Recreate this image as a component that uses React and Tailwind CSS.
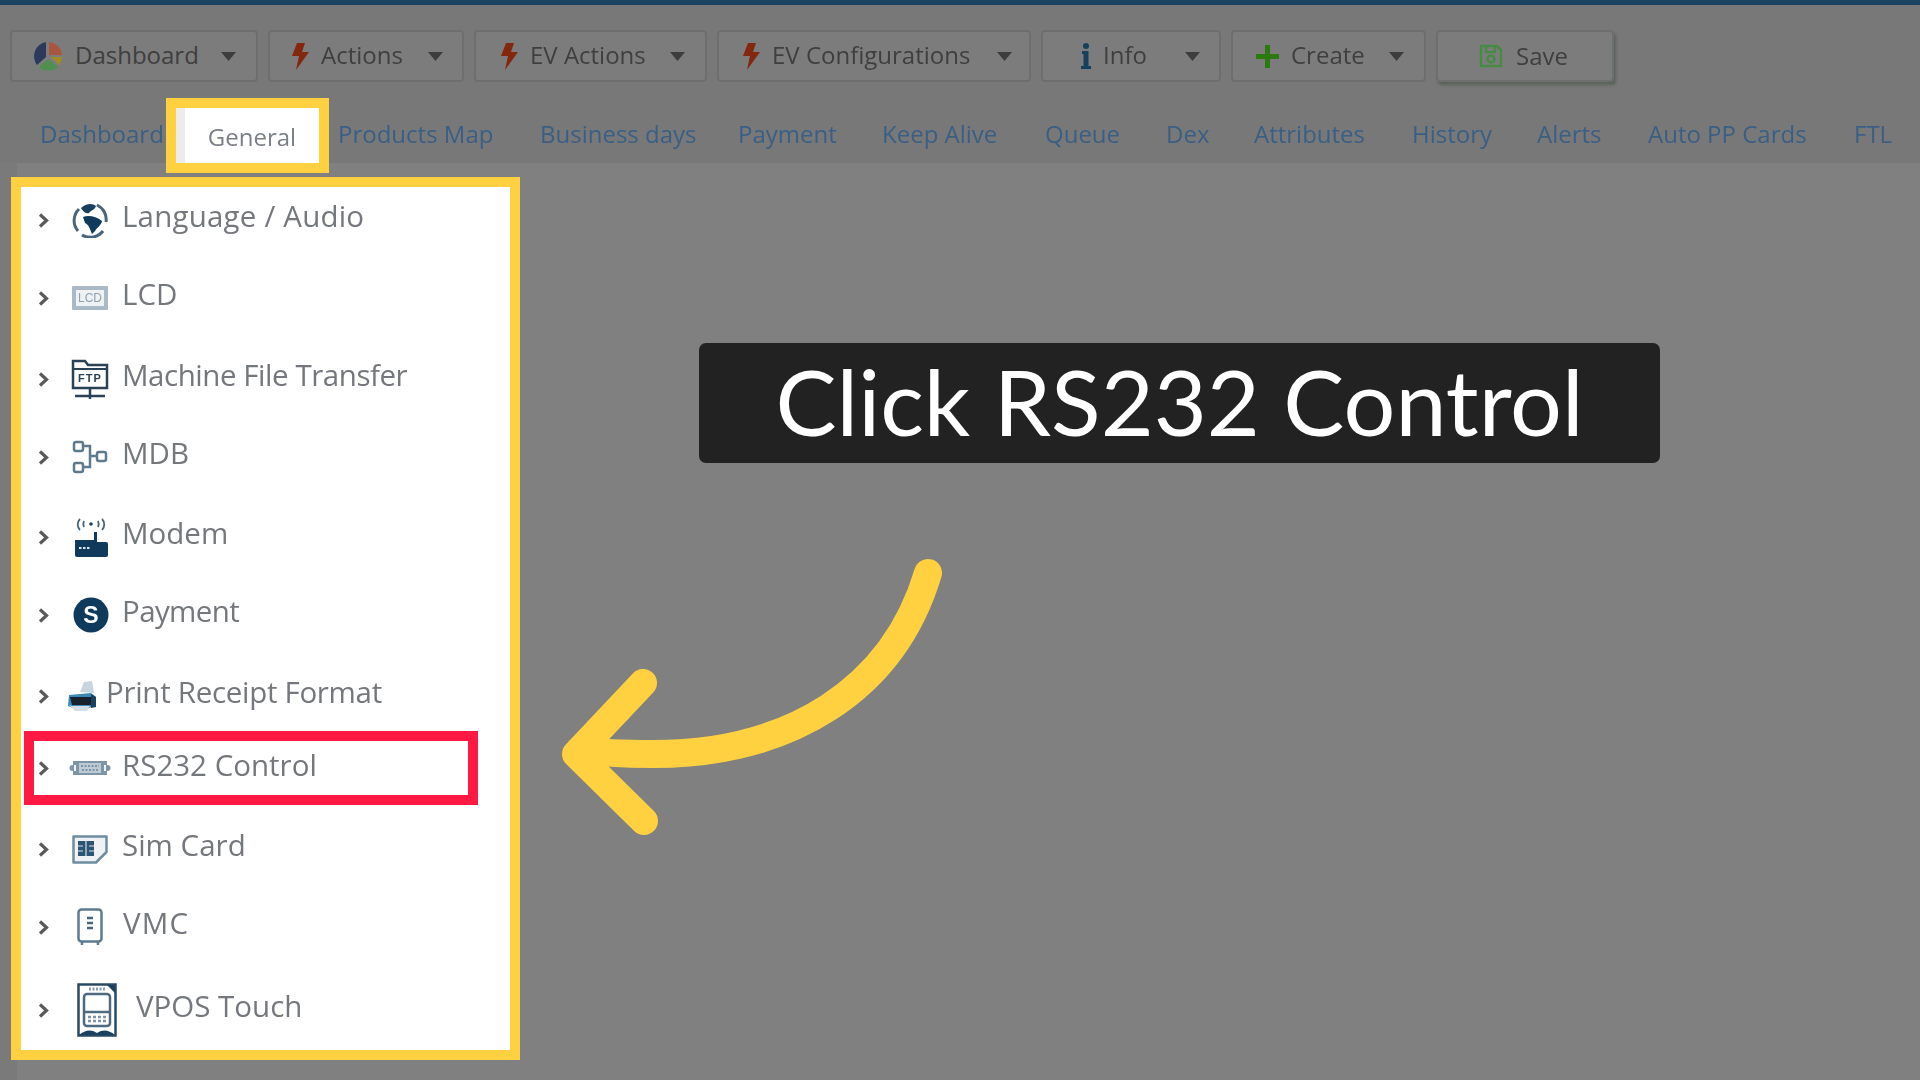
const Tri = () => (
  <svg width="15" height="9" viewBox="0 0 15 9" className="shrink-0 ml-auto"><path d="M0 0H15L7.5 9Z" fill="#3d3d3d" /></svg>
);
const Bolt = () => (
  <svg width="18" height="27" viewBox="0 0 18 27" className="shrink-0"><path d="M6 0H14L11 9H18L5 27L8 13H1Z" fill="#83280e" /></svg>
);
const Pie = () => (
  <svg width="30" height="30" viewBox="0 0 30 30" className="shrink-0">
    <path d="M13 1A14.500 14.500 0 0 0 4 24L13 16Z" fill="#2b3a5c" />
    <path d="M16 1A14 14 0 0 1 29 14H16Z" fill="#a8563f" />
    <path d="M18 16H29A14 14 0 0 1 26 24Z" fill="#a08d22" />
    <path d="M15 18L25 26A14 14 0 0 1 6 26Z" fill="#4f9050" />
  </svg>
);
const InfoI = () => (
  <svg width="10" height="26" viewBox="0 0 10 26" className="shrink-0"><circle cx="5" cy="3" r="3" fill="#17405f" /><path d="M1 8H7.500V23H10V26H0V23H2.500V11H1Z" fill="#17405f" /></svg>
);
const Plus = () => (
  <svg width="23" height="23" viewBox="0 0 23 23" className="shrink-0"><path d="M9 0H14V9H23V14H14V23H9V14H0V9H9Z" fill="#2b7a0f" /></svg>
);
const SaveI = () => (
  <svg width="24" height="24" viewBox="0 0 24 24" className="shrink-0" fill="none" stroke="#468a46" strokeWidth="2.500"><path d="M2 2H18L22 6V22H2Z" /><path d="M7 2V8H16V2" /><circle cx="12" cy="15" r="3.500" /></svg>
);

const Globe = () => (
  <svg width="36" height="36" viewBox="0 0 36 36">
    <path d="M7 7A16 16 0 0 0 6 29" fill="none" stroke="#47657c" strokeWidth="3" />
    <path d="M10 33A16 16 0 0 0 31 29" fill="none" stroke="#47657c" strokeWidth="3" />
    <path d="M25 3A16 16 0 0 1 34 20" fill="none" stroke="#47657c" strokeWidth="3" />
    <path d="M9 6C14 1 21 1 24 4C23 8 19 8 17 11C13 12 11 9 9 6Z" fill="#17405f" />
    <path d="M11 15C16 13 24 14 30 19C29 24 25 25 23 29L20 32C18 27 17 23 13 21Z" fill="#0f3a5c" />
  </svg>
);
const Lcd = () => (
  <svg width="38" height="26" viewBox="0 0 38 26">
    <rect x="1" y="1" width="36" height="24" rx="1" fill="#a9bac6" />
    <rect x="5" y="5" width="28" height="16" fill="#eef2f5" />
    <text x="19" y="17" textAnchor="middle" fontSize="12" fontFamily="Liberation Sans" fill="#8fa2b0">LCD</text>
  </svg>
);
const Ftp = () => (
  <svg width="38" height="42" viewBox="0 0 38 42">
    <path d="M2 30V3H14L17 7H36V30Z" fill="none" stroke="#2a4256" strokeWidth="2.500" />
    <path d="M2 11H36" stroke="#2a4256" strokeWidth="2" />
    <text x="19" y="24" textAnchor="middle" fontSize="11" fontWeight="700" fontFamily="Liberation Sans" letterSpacing="1" fill="#2a4256">FTP</text>
    <path d="M19 30V41M4 38H34" stroke="#2a4256" strokeWidth="2.500" />
  </svg>
);
const Mdb = () => (
  <svg width="36" height="34" viewBox="0 0 36 34" fill="none" stroke="#5d7a8f" strokeWidth="2.500">
    <rect x="2" y="2" width="9" height="9" rx="2" />
    <rect x="2" y="23" width="9" height="9" rx="2" />
    <rect x="25" y="12" width="9" height="9" rx="2" />
    <path d="M11 6H18V27H11M18 16H25" />
  </svg>
);
const ModemI = () => (
  <svg width="38" height="42" viewBox="0 0 38 42">
    <path d="M8 3C5 6 5 11 8 14M12 5C11 7 11 9 12 11M26 5C27 7 27 9 26 11M30 3C33 6 33 11 30 14" fill="none" stroke="#47657c" strokeWidth="1.800" />
    <circle cx="19" cy="8" r="1.800" fill="#1b4160" />
    <rect x="22" y="16" width="3" height="12" fill="#103a5c" />
    <rect x="3" y="26" width="33" height="15" rx="2" fill="#103a5c" />
    <path d="M7 32H18" stroke="#dfe8ee" strokeWidth="2" strokeDasharray="2.500 1.500" />
    <rect x="3" y="24" width="22" height="3" fill="#103a5c" />
  </svg>
);
const Dollar = () => (
  <svg width="36" height="36" viewBox="0 0 36 36">
    <circle cx="18" cy="18" r="17.500" fill="#0f3a5c" />
    <text x="18" y="26" textAnchor="middle" fontSize="23" fontWeight="700" fontFamily="Liberation Sans" fill="#ffffff">S</text>
  </svg>
);
const Printer = () => (
  <svg width="30" height="32" viewBox="0 0 30 32">
    <path d="M13 12L17 2L25 1L27 13Z" fill="#c9d5de" />
    <path d="M2 15L24 13L29 17V25L20 29H8L1 26Z" fill="#3d87b5" />
    <path d="M3 17H24L25 25H5Z" fill="#17222c" />
    <path d="M2 25L8 31H20L23 26H5Z" fill="#d3dde4" />
    <path d="M24 14L29 17V27L24 28Z" fill="#1b4160" />
  </svg>
);
const Rs232 = () => (
  <svg width="42" height="22" viewBox="0 0 42 22">
    <path d="M4 4H38V18H4Z" fill="#7d95a6" />
    <circle cx="3.500" cy="11" r="3" fill="#7d95a6" />
    <circle cx="38.500" cy="11" r="3" fill="#7d95a6" />
    <rect x="10" y="6" width="22" height="10" fill="#bccad4" />
    <path d="M12 9H30M13 13H29" stroke="#7d95a6" strokeWidth="1.800" strokeDasharray="2 1.500" />
    <rect x="5" y="8" width="2" height="6" fill="#f2f5f7" />
    <rect x="35" y="8" width="2" height="6" fill="#f2f5f7" />
  </svg>
);
const Sim = () => (
  <svg width="36" height="30" viewBox="0 0 36 30">
    <path d="M1.500 2.500H34.500V18L24 28.500H1.500Z" fill="#eef2f5" stroke="#6f8ca0" strokeWidth="2.500" strokeLinejoin="round" />
    <rect x="6" y="7" width="16" height="15" fill="#2b5573" />
    <path d="M14 7V22M6 12H11M17 12H22M6 17H11M17 17H22" stroke="#d9e2e8" strokeWidth="1.200" />
  </svg>
);
const Vmc = () => (
  <svg width="26" height="38" viewBox="0 0 26 38">
    <rect x="1.500" y="1.500" width="23" height="32" rx="3" fill="none" stroke="#5d7a8f" strokeWidth="2.500" />
    <path d="M5 34V37M21 34V37" stroke="#5d7a8f" strokeWidth="2.500" />
    <path d="M10 10H16M10 15H16M10 20H16" stroke="#47657c" strokeWidth="2.500" />
  </svg>
);
const Vpos = () => (
  <svg width="40" height="54" viewBox="0 0 40 54">
    <rect x="1.500" y="1.500" width="37" height="51" fill="none" stroke="#2a4a63" strokeWidth="2.500" />
    <path d="M30 2H38V10ZM2 52C8 47 14 46 20 50C26 46 32 47 38 52Z" fill="#1b4160" />
    <path d="M12 6H28" stroke="#8aa0b0" strokeWidth="3" strokeDasharray="2 1.500" />
    <rect x="7" y="11" width="26" height="32" rx="3" fill="#ffffff" stroke="#4d6a80" strokeWidth="2.500" />
    <path d="M7 29H33" stroke="#4d6a80" strokeWidth="2.500" />
    <path d="M11 34H29M11 38H29" stroke="#7d95a6" strokeWidth="2.500" strokeDasharray="3 2" />
  </svg>
);

const Chevron = () => (
  <svg width="11" height="15" viewBox="0 0 11 15" className="shrink-0 blur-[0.6px]"><path d="M2 1.500L8.500 7.500L2 13.500" fill="none" stroke="#5a5a5a" strokeWidth="3.200" /></svg>
);

const buttons = [
  { label: "Dashboard", icon: <Pie />, box: "w-[248px] pl-[21px] pr-[20px]" },
  { label: "Actions", icon: <Bolt />, box: "w-[196px] pl-[21px] pr-[19px]" },
  { label: "EV Actions", icon: <Bolt />, box: "w-[233px] pl-[24px] pr-[20px]" },
  { label: "EV Configurations", icon: <Bolt />, box: "w-[314px] pl-[23px] pr-[17px]" },
  { label: "Info", icon: <InfoI />, box: "w-[180px] pl-[38px] pr-[19px]" },
  { label: "Create", icon: <Plus />, box: "w-[195px] pl-[23px] pr-[20px]" },
];

const tabs = [
  { label: "Dashboard", box: "w-[126px]" },
  { label: "General", active: true },
  { label: "Products Map", box: "w-[202px] ml-[19px]" },
  { label: "Business days", box: "w-[198px]" },
  { label: "Payment", box: "w-[144px]" },
  { label: "Keep Alive", box: "w-[163px]" },
  { label: "Queue", box: "w-[121px]" },
  { label: "Dex", box: "w-[88px]" },
  { label: "Attributes", box: "w-[158px]" },
  { label: "History", box: "w-[125px]" },
  { label: "Alerts", box: "w-[111px]" },
  { label: "Auto PP Cards", box: "w-[206px]" },
  { label: "FTL", box: "w-[40px]" },
];

const rows = [
  { label: "Language / Audio", icon: <Globe />, gap: "mt-[3px]", ic: "w-[36px] ml-[23px]", tx: "ml-[14px] tracking-[0.2px]" },
  { label: "LCD", icon: <Lcd />, gap: "mt-[18px]", ic: "w-[38px] ml-[22px]", tx: "ml-[13px]" },
  { label: "Machine File Transfer", icon: <Ftp />, gap: "mt-[21px]", ic: "w-[38px] ml-[22px]", tx: "ml-[13px] tracking-[-0.45px]" },
  { label: "MDB", icon: <Mdb />, gap: "mt-[18px]", ic: "w-[36px] ml-[23px]", tx: "ml-[14px]" },
  { label: "Modem", icon: <ModemI />, gap: "mt-[20px]", ic: "w-[38px] ml-[23px]", tx: "ml-[12px]" },
  { label: "Payment", icon: <Dollar />, gap: "mt-[18px]", ic: "w-[36px] ml-[24px]", tx: "ml-[13px] tracking-[-0.6px]" },
  { label: "Print Receipt Format", icon: <Printer />, gap: "mt-[21px]", ic: "w-[30px] ml-[18px]", tx: "ml-[9px] tracking-[-0.3px]" },
];

const rows2 = [
  { label: "Sim Card", icon: <Sim />, gap: "mt-[14px]", ic: "w-[36px] ml-[23px]", tx: "ml-[14px]" },
  { label: "VMC", icon: <Vmc />, gap: "mt-[18px]", ic: "w-[26px] ml-[28px]", tx: "ml-[20px] tracking-[1.2px]" },
  { label: "VPOS Touch", icon: <Vpos />, gap: "mt-[23px]", ic: "w-[40px] ml-[28px]", tx: "ml-[19px]" },
];

function Row({ r }) {
  return (
    <div className={"flex items-center h-[60px] pl-[17px] " + r.gap}>
      <Chevron />
      <div className={"flex justify-center shrink-0 blur-[0.6px] " + r.ic}>{r.icon}</div>
      <span className={"mb-[8px] text-[29.500px] leading-none text-[#74777b] blur-[0.7px] whitespace-nowrap " + r.tx}>{r.label}</span>
    </div>
  );
}

export default function App() {
  return (
    <div className="relative w-[1920px] h-[1080px] overflow-hidden bg-[linear-gradient(90deg,#7a7a7a_17px,#808080_17px)] font-['Open_Sans',sans-serif]">
      <div className="h-[5px] bg-[#1a4460] shadow-[0_2px_4px_rgba(0,0,0,0.25)]" />
      <div className="h-[158px] bg-[#787878]">
        <div className="flex gap-[10px] pt-[25px] pl-[10px] blur-[0.7px]">
          {buttons.map((b) => (
            <div key={b.label} className={"flex items-center gap-3 h-[52px] rounded-[4px] border-2 border-[#6e6e6e] bg-[#7c7c7c] text-[24px] text-[#3f3f3f] " + b.box}>
              {b.icon}
              <span className="mb-[2px] whitespace-nowrap">{b.label}</span>
              <Tri />
            </div>
          ))}
          <div className="flex items-center gap-[13px] w-[178px] h-[52px] pl-[41px] rounded-[4px] border-2 border-[#6e6e6e] bg-[#7c7c7c] text-[24px] text-[#3f3f3f] shadow-[2px_3px_3px_rgba(60,80,60,0.5)]">
            <SaveI />
            <span>Save</span>
          </div>
        </div>
        <div className="flex items-start h-[55px] mt-[26px] pl-[40px] text-[24px] text-[#3a5f85]">
          {tabs.map((t) =>
            t.active ? (
              <div key={t.label} className="flex items-center justify-center w-[143px] h-[55px] ml-[10px] pt-[2px] bg-white border-l-[9px] border-l-[#ececec] outline-[10px] outline-[#ffd140] text-[#7b7f86]">
                <span className="blur-[0.7px]">{t.label}</span>
              </div>
            ) : (
              <div key={t.label} className={"flex items-center h-[55px] pb-[4px] whitespace-nowrap " + t.box}>
                <span className="blur-[0.7px]">{t.label}</span>
              </div>
            )
          )}
        </div>
      </div>
      <div className="w-[509px] h-[883px] ml-[11px] mt-[14px] bg-white border-[10px] border-[#ffd140]">
        {rows.map((r) => <Row key={r.label} r={r} />)}
        <div className="flex items-center w-[454px] h-[74px] mt-[5px] ml-[3px] pl-[4px] border-[10px] border-[#ff1a44]">
          <Chevron />
          <div className="flex justify-center shrink-0 w-[42px] ml-[20px] blur-[0.6px]"><Rs232 /></div>
          <span className="mb-[7px] ml-[11px] text-[29.500px] leading-none text-[#74777b] blur-[0.7px] whitespace-nowrap">RS232 Control</span>
        </div>
        {rows2.map((r) => <Row key={r.label} r={r} />)}
      </div>
      <div className="absolute left-[699px] top-[343px] flex items-center justify-center w-[961px] h-[120px] pb-[5px] rounded-[7px] bg-[#222222] font-['Lato',sans-serif] text-[91.500px] text-white">
        Click RS232 Control
      </div>
      <svg className="absolute left-0 top-0 pointer-events-none" width="1920" height="1080" viewBox="0 0 1920 1080" fill="none" stroke="#ffd140" strokeWidth="28" strokeLinecap="round" strokeLinejoin="round">
        <path d="M928 573C893 690 790 754 653 754C625 754 600 753 580 750" />
        <path d="M643 683L576 754L644 821" />
      </svg>
    </div>
  );
}
